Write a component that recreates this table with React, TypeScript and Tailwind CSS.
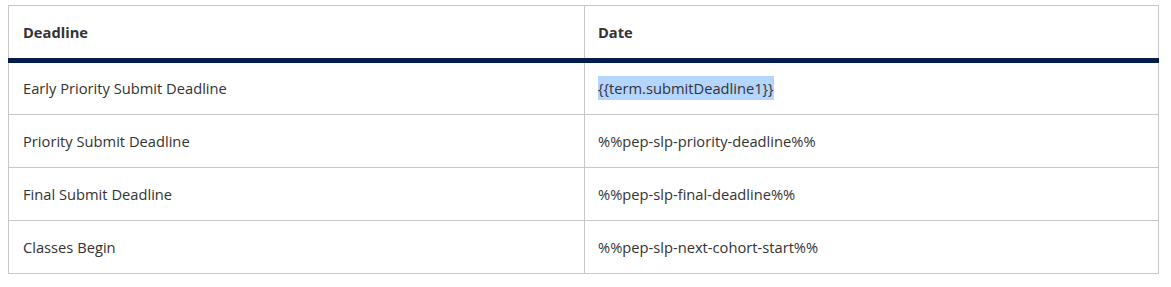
const rows: [string, string][] = [
  ["Early Priority Submit Deadline", "{{term.submitDeadline1}}"],
  ["Priority Submit Deadline", "%%pep-slp-priority-deadline%%"],
  ["Final Submit Deadline", "%%pep-slp-final-deadline%%"],
  ["Classes Begin", "%%pep-slp-next-cohort-start%%"],
];

export default function App() {
  return (
    <div className="bg-white pl-2 pt-[5px] pr-3 font-['Open_Sans',sans-serif] text-[14.7px] text-[#333]">
      <table className="w-full border-collapse border border-[#c8c8c8]">
        <thead>
          <tr className="border-b-[5px] border-b-[#061c4b]">
            <th className="h-[55px] w-[576px] border-r border-[#c8c8c8] px-[14px] text-left font-bold">Deadline</th>
            <th className="h-[55px] px-[13px] text-left font-bold">Date</th>
          </tr>
        </thead>
        <tbody>
          {rows.map(([label, value], i) => (
            <tr key={label} className="border-t border-[#c8c8c8]">
              <td className={`${i === 0 ? "h-[54px]" : "h-[53px]"} border-r border-[#c8c8c8] px-[14px]`}>{label}</td>
              <td className="px-[13px]">
                {i === 0 ? <span className="bg-[#b4d5fe] py-[2px]">{value}</span> : value}
              </td>
            </tr>
          ))}
        </tbody>
      </table>
    </div>
  );
}
